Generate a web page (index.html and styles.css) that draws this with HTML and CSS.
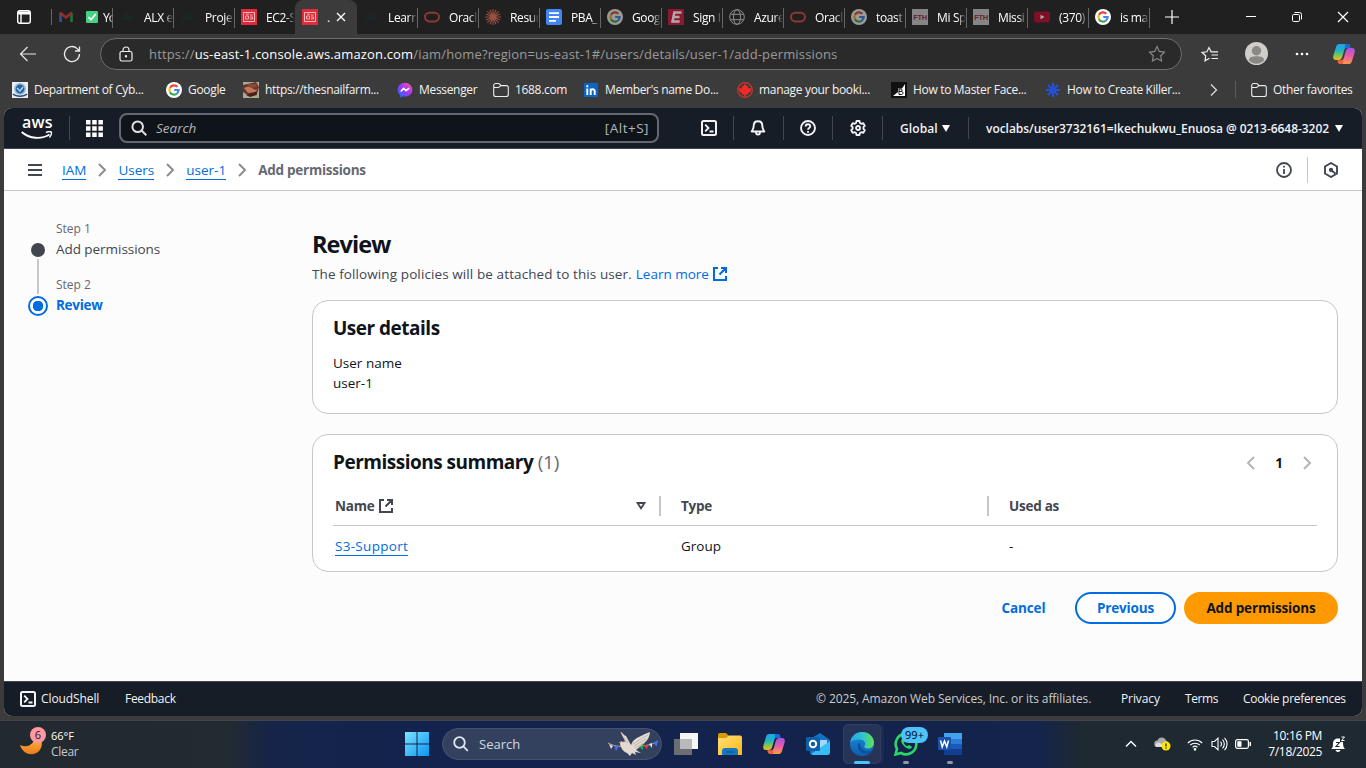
FILE: index.html
```html
<!DOCTYPE html>
<html lang="en">
<head>
<meta charset="utf-8">
<title>Add permissions | IAM | Global</title>
<link rel="stylesheet" href="styles.css">
</head>
<body>
<svg class="defs" width="0" height="0">
  <defs>
    <linearGradient id="cpA" x1="0" y1="0" x2="0" y2="1"><stop offset="0" stop-color="#1fa0e8"/><stop offset=".45" stop-color="#22b8c0"/><stop offset=".75" stop-color="#8fc83e"/><stop offset="1" stop-color="#f4b223"/></linearGradient>
    <linearGradient id="cpB" x1="0" y1="0" x2="0" y2="1"><stop offset="0" stop-color="#a552e8"/><stop offset=".5" stop-color="#e85aa8"/><stop offset="1" stop-color="#ff9a4a"/></linearGradient>
    <linearGradient id="edA" x1="0" y1="0" x2="1" y2="0"><stop offset="0" stop-color="#2aa5e0"/><stop offset=".5" stop-color="#2cc3d0"/><stop offset="1" stop-color="#62e04c"/></linearGradient>
    <linearGradient id="edB" x1="0" y1="0" x2="0" y2="1"><stop offset="0" stop-color="#1b8fd8"/><stop offset="1" stop-color="#0c5db0"/></linearGradient>
    <linearGradient id="win" x1="0" y1="0" x2="1" y2="1"><stop offset="0" stop-color="#7be3ff"/><stop offset="1" stop-color="#0a94f0"/></linearGradient>
    <linearGradient id="moon" x1="0" y1="0" x2="0" y2="1"><stop offset="0" stop-color="#ffc14d"/><stop offset="1" stop-color="#ee7a16"/></linearGradient>
    <linearGradient id="fold" x1="0" y1="0" x2="1" y2="1"><stop offset="0" stop-color="#ffe07a"/><stop offset="1" stop-color="#fcb813"/></linearGradient>
    <linearGradient id="msg" x1="0" y1="1" x2="1" y2="0"><stop offset="0" stop-color="#0a7cff"/><stop offset=".5" stop-color="#a033ff"/><stop offset="1" stop-color="#ff5c87"/></linearGradient>
    <symbol id="google" viewBox="0 0 16 16"><circle cx="8" cy="8" r="8" fill="#fff"/><g fill="none" stroke-width="2.2"><path d="M11.3 4.7A4.6 4.6 0 0 0 4 5.800" stroke="#ea4335"/><path d="M4 5.800a4.600 4.600 0 0 0 0 4.400" stroke="#fbbc05"/><path d="M4 10.200a4.600 4.600 0 0 0 7 1.300" stroke="#34a853"/><path d="M11 11.500A4.600 4.600 0 0 0 12.600 8H8.200" stroke="#4285f4"/></g></symbol>
    <symbol id="badge" viewBox="0 0 16 16"><path fill="#dd2c3a" d="M0 0h16v16H0z"/><g fill="none" stroke="#ffb9bd"><path d="M2.500 3.500h11v9h-11z"/><path d="M4.500 7h3v3h-3zM9 6h2.500M9 8h2.500v2H9M5 5.200h3" stroke-width=".9"/></g></symbol>
    <symbol id="oracle" viewBox="0 0 16 16"><rect x="1" y="3.800" width="14" height="8.600" rx="4.300" fill="none" stroke="#8b3a30" stroke-width="2"/></symbol>
    <symbol id="fth" viewBox="0 0 16 16"><path fill="#868686" d="M0 0h16v16H0z"/><text x="8" y="10.800" text-anchor="middle" font-size="7.500" font-weight="700" font-family="Liberation Sans,sans-serif" fill="#682330">FTH</text></symbol>
    <symbol id="alx" viewBox="0 0 16 16"><text x="8" y="11" text-anchor="middle" font-size="9" font-weight="700" font-family="Liberation Sans,sans-serif" fill="#182b2b">alx</text></symbol>
    <symbol id="folder" viewBox="0 0 16 16"><path d="M.7 12.500v-9a2 2 0 0 1 2-2h2.700c.5 0 1 .2 1.300.6L8 3.600h5.300a2 2 0 0 1 2 2v6.900a2 2 0 0 1-2 2H2.700a2 2 0 0 1-2-2zM1 5.500h4.300c1.200 0 1.700-1.900 2.700-1.900" fill="none" stroke="#ececec" stroke-width="1.100"/></symbol>
    <symbol id="copilot" viewBox="0 0 24 24"><path fill="url(#cpA)" d="M7 2h8.500c2 0 2.500 1.500 3 3.500H15c-1.500 0-2.300 1-2.800 2.700L10 15.500C9.500 17 8.500 18 7 18H4C1.500 18 .7 16 1.400 13.500L4 5C4.600 3 5.500 2 7 2z"/><path fill="url(#cpB)" d="M17 22H8.500c-2 0-2.500-1.500-3-3.500H9c1.500 0 2.300-1 2.800-2.700L14 8.500C14.500 7 15.500 6 17 6h3c2.500 0 3.300 2 2.600 4.500L20 19c-.6 2-1.500 3-3 3z"/><path fill="#1869d8" d="M13 2h2.500c2 0 2.500 1.500 3 3.500H15c-1 0-1.700.5-2.200 1.300z"/><path fill="#f0603c" d="M11 22H8.500c-2 0-2.500-1.500-3-3.500H9c1 0 1.700-.5 2.200-1.300z"/></symbol>
    <symbol id="shell" viewBox="0 0 16 16"><rect x="1" y="1" width="14" height="14" rx="1.500" fill="none" stroke="currentColor" stroke-width="2"/><path d="M4.200 4.700 7.500 8l-3.300 3.300M8.500 11.500h4" fill="none" stroke="currentColor" stroke-width="1.800"/></symbol>
    <symbol id="chev" viewBox="0 0 16 16"><path d="m5 2 6 6-6 6" fill="none" stroke="currentColor" stroke-width="2"/></symbol>
    <symbol id="ext" viewBox="0 0 16 16"><path d="M6 2H2v12h12v-4M9 2h5v5M14 2 7.500 8.500" fill="none" stroke="currentColor" stroke-width="2"/></symbol>
  </defs>
</svg>

<div class="tabstrip">
  <div class="tabmenu"><svg width="16" height="16" viewBox="0 0 16 16" fill="none" stroke="#fff" stroke-width="1.400"><rect x="1.700" y="1.700" width="12.600" height="12.600" rx="2.200"/><path d="M2 4h12" stroke-width="3"/><path d="M5 4v10"/></svg></div>
  <div class="tab mail"><svg width="16" height="16" viewBox="0 0 16 16" fill="none" stroke-width="2.600"><path d="M2.500 13V4" stroke="#2c5794"/><path d="M13.500 13V4" stroke="#24733e"/><path d="m2 3.500 6 5 6-5" stroke="#982c27"/></svg><svg class="check" width="12" height="12" viewBox="0 0 12 12"><rect width="12" height="12" rx="1" fill="#45d083"/><path d="m2.500 6 2.500 2.700L9.700 3" fill="none" stroke="#fff" stroke-width="1.700"/></svg><span>Yo</span></div>
  <div class="tab"><svg><use href="#alx"/></svg><span>ALX e</span></div>
  <div class="tab"><svg><use href="#alx"/></svg><span>Proje</span></div>
  <div class="tab nosep"><svg><use href="#badge"/></svg><span>EC2-S</span></div>
  <div class="tab active"><svg><use href="#badge"/></svg><span>.</span><svg class="x" viewBox="0 0 16 16"><path d="m4 4 8 8M12 4l-8 8" stroke="#fff" stroke-width="1.300"/></svg></div>
  <div class="tab"><svg><use href="#alx"/></svg><span>Learn</span></div>
  <div class="tab"><svg><use href="#oracle"/></svg><span>Oracl</span></div>
  <div class="tab"><svg viewBox="0 0 16 16" stroke="#9a5040" stroke-width="1.100"><path d="M8 0v16M0 8h16M2.300 2.300l11.400 11.400M13.700 2.300 2.300 13.700M5 .8l6 14.400M11 .8 5 15.200M.8 5l14.400 6M.8 11l14.400-6"/></svg><span>Resur</span></div>
  <div class="tab"><svg viewBox="0 0 16 16"><rect width="16" height="16" rx="2" fill="#4285f4"/><path d="M3 4.200h10M3 8h10M3 11.800h7" stroke="#fff" stroke-width="1.800"/></svg><span>PBA_</span></div>
  <div class="tab dim"><svg><use href="#google"/></svg><span>Goog</span></div>
  <div class="tab"><svg viewBox="0 0 16 16"><path fill="#8c1832" d="M0 0h16v16H0z"/><path d="M13.500 3.500H6.300L4.500 12.500h7.200M5.500 8h6" fill="none" stroke="#b3a5a8" stroke-width="2.500"/></svg><span>Sign I</span></div>
  <div class="tab"><svg viewBox="0 0 16 16" fill="none" stroke="#8e8e8e"><circle cx="8" cy="8" r="7.300"/><ellipse cx="8" cy="8" rx="3.500" ry="7.300"/><path d="M1.500 5.300h13M1.500 10.700h13"/></svg><span>Azure</span></div>
  <div class="tab"><svg><use href="#oracle"/></svg><span>Oracl</span></div>
  <div class="tab dim"><svg><use href="#google"/></svg><span>toast</span></div>
  <div class="tab"><svg><use href="#fth"/></svg><span>Mi Sp</span></div>
  <div class="tab"><svg><use href="#fth"/></svg><span>Missi</span></div>
  <div class="tab"><svg viewBox="0 0 16 16"><rect y="2.500" width="16" height="11" rx="2.500" fill="#7d1026"/><path d="m6.500 5.700 4 2.300-4 2.300z" fill="#aaa"/></svg><span>(370)</span></div>
  <div class="tab"><svg><use href="#google"/></svg><span>is ma</span></div>
  <svg class="plus" width="14" height="14" viewBox="0 0 14 14"><path d="M7 0v14M0 7h14" stroke="#fff" stroke-width="1.200"/></svg>
  <div class="winctl">
    <svg width="12" height="12" viewBox="0 0 12 12"><path d="M1 5.500h10" stroke="#fff"/></svg>
    <svg width="12" height="12" viewBox="0 0 12 12" fill="none" stroke="#fff"><rect x="1.500" y="3.500" width="7" height="7" rx="1.200"/><path d="M3.500 1.500H8.500a2 2 0 0 1 2 2V8.500"/></svg>
    <svg width="12" height="12" viewBox="0 0 12 12"><path d="m1 1 10 10M11 1 1 11" stroke="#fff" stroke-width="1.200"/></svg>
  </div>
</div>

<div class="toolbar">
  <svg class="back" width="18" height="16" viewBox="0 0 18 16" fill="none" stroke="#e8e8e8" stroke-width="1.200"><path d="M17 8H1.500M8.500 1l-7 7 7 7"/></svg>
  <svg class="reload" width="18" height="18" viewBox="0 0 18 18" fill="none" stroke="#e8e8e8" stroke-width="1.300"><path d="M16.500 9a7.500 7.500 0 1 1-2.300-5.400L16.300 6M16.500 1.500V6H12"/></svg>
  <div class="address">
    <svg width="14" height="16" viewBox="0 0 14 16" fill="none" stroke="#f0f0f0" stroke-width="1.200"><rect x="1" y="5.500" width="12" height="9.500" rx="1.800"/><path d="M4 5.500V4a3 3 0 0 1 6 0v1.500"/><circle cx="7" cy="10.200" r=".6"/></svg>
    <div class="url">https://<b>us-east-1.console.aws.amazon.com</b>/iam/home?region=us-east-1#/users/details/user-1/add-permissions</div>
    <svg class="star" width="18" height="18" viewBox="0 0 18 18" fill="none" stroke="#8d8d8d" stroke-width="1.100"><path d="m9 1.500 2.300 4.900 5.200.7-3.800 3.700.9 5.300L9 13.600l-4.600 2.500.9-5.300L1.500 7.100l5.200-.7z"/></svg>
  </div>
  <svg class="favs" width="18" height="18" viewBox="0 0 18 18" fill="none" stroke="#f0f0f0" stroke-width="1.200"><path d="M8.500 13.200 4 15.800l.7-5L1.200 7.500l4.700-.7L8 2.500l2.100 4.300H17M10.500 10H17M10.500 13.500H17"/></svg>
  <svg class="avatar" width="23" height="23" viewBox="0 0 23 23"><circle cx="11.500" cy="11.500" r="11.500" fill="#d0cecb"/><circle cx="11.500" cy="8.800" r="4.700" fill="#8a8784"/><path d="M4 18.500c0-3.500 3.500-4.200 7.500-4.200s7.500.7 7.500 4.200a10.500 10.500 0 0 1-15 0z" fill="#8a8784"/></svg>
  <svg class="more" width="14" height="4" viewBox="0 0 14 4" fill="#fff"><circle cx="2" cy="2" r="1.300"/><circle cx="7" cy="2" r="1.300"/><circle cx="12" cy="2" r="1.300"/></svg>
  <svg class="cop" width="24" height="24"><use href="#copilot"/></svg>
</div>

<div class="favorites">
  <div class="fav f1"><svg viewBox="0 0 16 16"><path fill="#e9eef2" d="M0 0h16v16H0z"/><circle cx="8" cy="7" r="6" fill="#9bbbd0"/><circle cx="8" cy="7" r="4.400" fill="#2464a5"/><path d="m5 6 3 3 3-4" stroke="#b9ddf3" stroke-width="1.300" fill="none"/><path d="M1 12c3 3 11 3 14 0" stroke="#244a83" stroke-width="1.500" fill="none"/></svg>Department of Cyb...</div>
  <div class="fav f2"><svg><use href="#google"/></svg>Google</div>
  <div class="fav f3"><svg viewBox="0 0 16 16"><path fill="#a9aa98" d="M0 0h16v16H0z"/><path fill="#6e3226" d="M0 3 13 0l3 5-2 7-8 2-6-4z"/><path fill="#c17a5f" d="M1 6q5-3 8 0t6 1l-3 3-7 1z"/><path fill="#8a4a38" d="M4 2h9l1 3-6 1z"/><path fill="#4a2019" d="M3 13l10-3 1 3-7 2z"/></svg>https://thesnailfarm...</div>
  <div class="fav f4"><svg viewBox="0 0 16 16"><path fill="url(#msg)" d="M8 .8c4.100 0 7.300 3 7.300 6.900S12.100 14.600 8 14.600c-.8 0-1.500-.1-2.200-.3l-2.600 1.100V13A6.800 6.800 0 0 1 .7 7.700C.7 3.800 3.900.8 8 .8z"/><path d="m3.800 9.500 2.800-3L9 8.700l3.200-2.500" fill="none" stroke="#fff" stroke-width="1.600"/></svg>Messenger</div>
  <div class="fav f5"><svg><use href="#folder"/></svg>1688.com</div>
  <div class="fav f6"><svg viewBox="0 0 16 16"><path fill="#0a66c2" d="M1 1h14v14H1z"/><path d="M4.300 6.500V13M4.300 3.300v1.900M7.700 13V6.500M7.700 9c0-2.200 4-2.500 4 0v4" fill="none" stroke="#fff" stroke-width="1.900"/></svg>Member's name Do...</div>
  <div class="fav f7"><svg viewBox="0 0 16 16"><circle cx="8" cy="8" r="7.300" fill="none" stroke="#d8342c" stroke-width="1.200"/><path fill="#f52a28" d="m8 1.500 1.600 2.800 1.600-.8-.3 3 3.300-.8-.8 2.300 1.100.8-3.600 2.600.4 1.200-2.600-.2.100 2.100H7.200l.1-2.100-2.600.2.400-1.200-3.600-2.600 1.100-.8-.8-2.300 3.300.8-.3-3 1.600.8z"/></svg>manage your booki...</div>
  <div class="fav f8"><svg viewBox="0 0 16 16"><path fill="#111" d="M0 0h16v16H0z"/><path fill="#fff" d="M14 2v12H2l5-4V6.500h4z"/><path d="M8 7v5.500h2.500c2 0 2-3 0-3H8M8 7h2c1.500 0 1.500 2.500 0 2.500" fill="none" stroke="#111"/></svg>How to Master Face...</div>
  <div class="fav f9"><svg viewBox="0 0 16 16" stroke="#2450dc" stroke-width="2.200" fill="none"><path d="M8 .8V7M8 9v6.200M1 8h6M9 8h6M3 3l4 4M9 9l4 4M13 3 9 7M7 9l-4 4"/><circle cx="8" cy="8" r="1.500"/></svg>How to Create Killer...</div>
  <svg class="morefav" width="8" height="14" viewBox="0 0 8 14"><path d="m1 1.500 5.500 5.500L1 12.500" fill="none" stroke="#ddd" stroke-width="1.300"/></svg>
  <div class="fav other"><svg><use href="#folder"/></svg>Other favorites</div>
</div>

<div class="page">
  <header class="nav">
    <div class="logo"><span>aws</span><svg width="32" height="9" viewBox="0 0 32 9" fill="none" stroke="#fff" stroke-width="1.900"><path d="M.7 1C8.500 8 20.500 8.500 28.500 3.500" /><path d="M25 1.500c2-.9 4.500-1 5.300-.4.500 1.300-.3 3.600-1.800 5.400" stroke-width="1.400"/></svg></div>
    <div class="apps"><svg width="17" height="17" viewBox="0 0 17 17" fill="#fff"><path d="M0 0h4.500v4.500H0zM6.200 0h4.500v4.500H6.200zM12.400 0h4.500v4.500h-4.500zM0 6.200h4.500v4.500H0zM6.200 6.200h4.500v4.500H6.200zM12.400 6.200h4.500v4.500h-4.500zM0 12.400h4.500v4.500H0zM6.200 12.400h4.500v4.500H6.200zM12.400 12.400h4.500v4.500h-4.500z"/></svg></div>
    <div class="search"><svg width="16" height="16" viewBox="0 0 16 16" fill="none" stroke="#dedee3" stroke-width="2"><circle cx="6.700" cy="6.700" r="5.300"/><path d="m10.500 10.500 4.800 4.800"/></svg><i>Search</i><span>[Alt+S]</span></div>
    <div class="ico first"><svg width="16" height="16"><use href="#shell"/></svg></div>
    <div class="ico"><svg width="16" height="16" viewBox="0 0 16 16" fill="none" stroke="currentColor" stroke-width="1.900"><path d="M8 1.200c-2.700 0-4.300 2-4.300 4.500 0 3-1.200 4.300-2 5.800h12.600c-.8-1.500-2-2.800-2-5.800 0-2.500-1.600-4.500-4.300-4.500zM6 12c0 3.500 4 3.500 4 0" stroke-linejoin="round"/></svg></div>
    <div class="ico"><svg width="16" height="16" viewBox="0 0 16 16" fill="none" stroke="currentColor" stroke-width="1.900"><circle cx="8" cy="8" r="7"/><path d="M5.700 6.500C5.700 3.500 10.300 3.600 10.300 6.300 10.300 8 8 8 8 9.800M8 11v1.700"/></svg></div>
    <div class="ico"><svg width="16" height="16" viewBox="0 0 16 16" fill="none" stroke="currentColor" stroke-width="1.800" stroke-linejoin="round"><path d="M6.500 1h3l.5 2 1.300.8 2-.6 1.500 2.600L13.400 7.200v1.600l1.400 1.400-1.500 2.600-2-.6-1.300.8-.5 2h-3l-.5-2-1.300-.8-2 .6-1.500-2.600 1.400-1.400V7.200L1.200 5.800l1.500-2.600 2 .6L6 3z"/><circle cx="8" cy="8" r="2"/></svg></div>
    <div class="region">Global<svg class="tri" width="8" height="7" viewBox="0 0 8 7"><path d="M0 0h8L4 7z" fill="#fff"/></svg></div>
    <div class="account"><span>voclabs/user3732161=Ikechukwu_Enuosa @ 0213-6648-3202</span><svg class="tri" width="8" height="7" viewBox="0 0 8 7"><path d="M0 0h8L4 7z" fill="#fff"/></svg></div>
  </header>

  <div class="crumbs">
    <svg class="burger" width="14" height="12" viewBox="0 0 14 12"><path d="M0 1h14M0 6h14M0 11h14" stroke="#424650" stroke-width="2"/></svg>
    <a class="c1">IAM</a><svg class="sep"><use href="#chev"/></svg>
    <a class="c2">Users</a><svg class="sep"><use href="#chev"/></svg>
    <a class="c3">user-1</a><svg class="sep"><use href="#chev"/></svg>
    <b>Add permissions</b>
    <div class="info"><svg width="16" height="16" viewBox="0 0 16 16" fill="none" stroke="#424650" stroke-width="1.800"><circle cx="8" cy="8" r="7"/><path d="M8 3.800v1.800M8 7v5" /></svg></div>
    <div class="hex"><svg width="16" height="16" viewBox="0 0 16 16" fill="none" stroke="#424650" stroke-width="1.900"><path d="m8 1 6 3.500v7L8 15l-6-3.500v-7z"/><circle cx="8" cy="8" r="1.200" fill="#424650"/><path d="m8.500 8.500 4 3"/></svg></div>
  </div>

  <div class="body">
    <aside class="steps">
      <div class="step done"><div class="mark"><i class="dot"></i><i class="line"></i></div><div><small>Step 1</small><p>Add permissions</p></div></div>
      <div class="step current"><div class="mark"><i class="ring"></i></div><div><small>Step 2</small><p>Review</p></div></div>
    </aside>
    <main>
      <h1>Review</h1>
      <p class="desc"><span>The following policies will be attached to this user.</span> <a>Learn more</a> <svg width="16" height="16"><use href="#ext"/></svg></p>
      <section class="card details">
        <h2>User details</h2>
        <p>User name</p>
        <p>user-1</p>
      </section>
      <section class="card summary">
        <div class="cardhead"><h2>Permissions summary <em>(1)</em></h2>
          <div class="pager"><svg class="prev"><use href="#chev"/></svg><b>1</b><svg><use href="#chev"/></svg></div></div>
        <div class="row head">
          <div class="cell n">Name <svg width="16" height="16"><use href="#ext"/></svg><svg class="sort" width="10" height="8" viewBox="0 0 10 8"><path d="M1.500 1h7L5 6.300z" fill="none" stroke="#424650" stroke-width="1.800"/></svg></div>
          <div class="cell t">Type</div>
          <div class="cell u">Used as</div>
        </div>
        <div class="row">
          <div class="cell n"><a>S3-Support</a></div>
          <div class="cell t">Group</div>
          <div class="cell u">-</div>
        </div>
      </section>
      <div class="actions"><span class="btn link">Cancel</span><span class="btn outline">Previous</span><span class="btn primary">Add permissions</span></div>
    </main>
  </div>

  <footer>
    <svg width="16" height="16"><use href="#shell"/></svg>
    <span class="cs">CloudShell</span><span class="fb">Feedback</span>
    <span class="copy">© 2025, Amazon Web Services, Inc. or its affiliates.</span>
    <span class="pv">Privacy</span><span class="tm">Terms</span><span class="ck">Cookie preferences</span>
  </footer>
</div>

<div class="taskbar">
  <div class="weather">
    <svg width="26" height="30" viewBox="0 0 26 30"><path d="M0 18c8 4 16-2 14.500-10C22 9 24 18 19.500 23.500 14 30 3 28 0 18z" fill="url(#moon)"/><circle cx="18" cy="8" r="8" fill="#ff98a0"/><text x="18" y="12" text-anchor="middle" font-size="11" font-family="Open Sans,sans-serif" fill="#222">6</text></svg>
    <div>66°F<span>Clear</span></div>
  </div>
  <svg class="start" width="24" height="24" viewBox="0 0 24 24"><path fill="url(#win)" d="M0 0h11.500v11.500H0zM12.500 0H24v11.500H12.500zM0 12.500h11.500V24H0zM12.500 12.500H24V24H12.500z"/></svg>
  <div class="tsearch">
    <svg width="16" height="16" viewBox="0 0 16 16" fill="none" stroke="#dfe5ee" stroke-width="1.800"><circle cx="6.500" cy="6.500" r="5.300"/><path d="m10.300 10.300 4.500 4.500"/></svg>Search
    <svg class="dove" width="52" height="28" viewBox="0 0 52 28"><path d="M1 13c8 4 14 4 20 2M31 16c8 0 14-1 20-5" stroke="#d8bfae" fill="none" stroke-width=".8"/><path fill="#f2d6d0" d="m2 14 4 2-2 3z"/><path fill="#4a6cf0" d="m7 15.500 5 1-3 4.500z"/><path fill="#f6be25" d="m15 16.500 5-.5-1.500 5z"/><path fill="#e2dad0" d="M13.500 2c1 0 2.500 1.500 3.500 3l2 1 5 9 2-4c4-4 10-6 17-9-.5 7-5 11-9 14l-5 4 5 3-6-1 1 3-4-2-2 3-3-3c-5-2-6-6-7-9-.5-3 4-4.500 6-1z"/><path d="m26 14 15-9M27 16l12-7M28 18l9-5" stroke="#b5a79c" stroke-width=".7"/><path d="M15 5l6 8" stroke="#b5a79c" stroke-width=".7"/><circle cx="16" cy="11.500" r=".7" fill="#2b2b2b"/><path d="m13.500 11.500-2 1 2 1z" fill="#db8b65"/><path fill="#28a35c" d="m32 17 4-2 0 5z"/><path fill="#e84338" d="m37 15 4-.5-1 5z"/><path fill="#e9e4d9" d="m42 14 3-1 0 5z"/><path fill="#4a6cf0" d="m46 12.500 5-2-1.500 6z"/></svg>
  </div>
  <div class="apps2">
    <div class="app"><svg viewBox="0 0 24 24"><path fill="#f5f5f5" d="M6 1h18v16H6z"/><path fill="#777" opacity=".9" d="M0 7h18v16H0z"/><path fill="#b9b9b9" d="M6 7h12v10H6z"/></svg></div>
    <div class="app"><svg viewBox="0 0 24 24"><path fill="#d99a00" d="M0 3a2 2 0 0 1 2-2h6l3 3v4H0z"/><path fill="url(#fold)" d="M0 6h8l3-2.500h11a2 2 0 0 1 2 2V23H0z"/><path fill="#1576c2" d="M4 23v-4a3 3 0 0 1 3-3h10a3 3 0 0 1 3 3v4z"/><path d="M8 20h8" stroke="#0c5596" stroke-width="1.200"/></svg></div>
    <div class="app"><svg><use href="#copilot"/></svg></div>
    <div class="app"><svg viewBox="0 0 24 24"><path fill="#1473c8" d="M4 7 14 1l10 7v12a3 3 0 0 1-3 3H7a3 3 0 0 1-3-3z"/><path fill="#a3d7f7" d="M12 8h9v5l-6 4-6-4z"/><path fill="#36bdf5" d="M24 9v11a3 3 0 0 1-3 3H7l-2-1z"/><rect y="5" width="14" height="14" rx="1.500" fill="#0f5ea8"/><circle cx="7" cy="12" r="3.200" fill="none" stroke="#fff" stroke-width="2"/></svg></div>
    <div class="app on"><svg viewBox="0 0 24 24"><circle cx="12" cy="12" r="12" fill="url(#edB)"/><path fill="url(#edA)" d="M.3 10C1.500 4 6 0 12 0c7 0 12 5 12 10.500 0 4-3 6-6.200 6-3 0-4.300-1.300-3.300-2.500 2.200-3-.5-6.500-5-6.500-4 0-7 1-9.200 2.500z"/><path fill="#0d4f9c" d="M9.500 10C6 14 8.500 20.500 15 21.500c3 .3 5.500-1 7.200-3-5 2.500-11.500 1-12.700-8.500z"/></svg><u></u></div>
    <div class="app"><svg viewBox="0 0 24 24" fill="none"><path d="M1.500 22.500 3 17A10.300 10.300 0 1 1 7 21z" stroke="#2bd566" stroke-width="2.600"/><path d="M8 7c-2 2 0 5 2.500 7.500 2.500 2 5.500 3.300 7 1.500l.3-1.600-3-1.400-1.500 1.300c-1.600-.6-2.800-1.800-3.500-3.300L11 9.500 9.800 6.700z" fill="#2bd566"/></svg><span class="count">99+</span><u></u></div>
    <div class="app"><svg viewBox="0 0 24 24"><path fill="#41a5ee" d="M6 1h18v6H6z"/><path fill="#2b7cd3" d="M6 7h18v5H6z"/><path fill="#185abd" d="M6 12h18v5.500H6z"/><path fill="#103f91" d="M6 17.500h18V23H6z"/><rect y="5" width="13" height="13" rx="1" fill="#1852ad"/><path d="m2.500 8.500 1.700 6.300L6.500 9l2.300 5.800 1.700-6.300" fill="none" stroke="#fff" stroke-width="1.500"/></svg><u></u></div>
  </div>
  <div class="tray">
    <svg class="t1" width="12" height="8" viewBox="0 0 12 8"><path d="m1 6.500 5-5 5 5" fill="none" stroke="#fff" stroke-width="1.400"/></svg>
    <svg class="t2" width="17" height="14" viewBox="0 0 17 14"><path d="M3.500 10a3.200 3.200 0 0 1 0-6.400A4.500 4.500 0 0 1 12 3.500C14 4 14.500 6 14 10z" fill="#aaa"/><path d="M1 9c2-6 7-3 8 1H3z" fill="#ddd"/><circle cx="12" cy="9" r="4.500" fill="#ffe600"/><path d="M12 6.500v3M12 10.500v1.200" stroke="#222" stroke-width="1.200"/></svg>
    <svg class="t3" width="16" height="13" viewBox="0 0 16 13" fill="none" stroke="#fff" stroke-width="1.100"><path d="M.8 5a10 10 0 0 1 14.400 0M3.200 7.200a6.800 6.800 0 0 1 9.600 0M5.600 9.400a3.400 3.400 0 0 1 4.800 0"/><circle cx="8" cy="11.300" r=".8" fill="#fff"/></svg>
    <svg class="t4" width="17" height="14" viewBox="0 0 17 14" fill="none" stroke="#fff" stroke-width="1.100"><path d="M1 4.500h2.500L7 1.200v11.600L3.500 9.500H1zM9.500 4.700c1.300 1.300 1.300 3.300 0 4.600M11.500 2.700a6 6 0 0 1 0 8.600M13.500.8a8.800 8.800 0 0 1 0 12.400"/></svg>
    <svg class="t5" width="16" height="10" viewBox="0 0 16 10"><rect x=".6" y=".6" width="12.800" height="8.800" rx="1.800" fill="none" stroke="#fff" stroke-width="1.200"/><path d="M2.300 2.300h4.200v5.400H2.300zM14.500 3H16v4h-1.500z" fill="#fff"/></svg>
    <div class="clock">10:16 PM<br>7/18/2025</div>
    <svg class="bell" width="15" height="16" viewBox="0 0 15 16"><path d="M0 13c1.500-1 2-2 2-5.500C2 4.500 4 2.500 7 2.500h2V6h3c0 3.500.5 6 2 7zM4.500 14c.5 2.500 4.500 2.500 5 0z" fill="#fff"/><path d="M5 6.500h3.500L5 10.500h3.500" stroke="#1d2a36" fill="none" stroke-width="1.100"/><path d="M10.500 1h3l-3 3.500h3" stroke="#fff" fill="none"/></svg>
  </div>
</div>
</body>
</html>
```
FILE: styles.css
```css
* { box-sizing: border-box; }
body { margin: 0; width: 1366px; height: 768px; overflow: hidden; background: #3b3b3b; font-family: "Open Sans", "Noto Sans", sans-serif; font-size: 12px; display: flex; flex-direction: column; }
svg { flex: none; display: block; }
p, h1, h2 { margin: 0; }
.defs { position: absolute; }

/* Browser tabs */
.tabstrip { height: 34px; background: #202020; display: flex; align-items: center; color: #fff; flex: none; }
.tabmenu { width: 52px; height: 16px; padding-left: 16px; border-right: 1px solid #666; }
.tab { width: 61px; height: 34px; padding-left: 6px; display: flex; align-items: center; flex: none; overflow: hidden; letter-spacing: -0.35px; background: linear-gradient(#666, #666) right 60% / 1px 20px no-repeat; }
.tab svg { width: 16px; height: 16px; }
.tab span { margin-left: 9px; white-space: nowrap; width: 29px; overflow: hidden; -webkit-mask-image: linear-gradient(90deg, #000 70%, transparent); mask-image: linear-gradient(90deg, #000 70%, transparent); }
.tab.nosep { background: none; }
.tab.mail .check { width: 12px; height: 12px; margin-left: 12px; }
.tab.mail span { margin-left: 5px; width: 10px; letter-spacing: -1px; }
.tab.dim svg { opacity: .55; }
.tab.active { background: #3b3b3b; border-radius: 8px 8px 0 0; width: 62px; margin: 0 0 0 -1px; padding-left: 7px; }
.tab.active span { width: 5px; mask-image: none; -webkit-mask-image: none; }
.tab.active .x { margin-left: 1px; }
.plus { margin-left: 15px; }
.winctl { margin-left: auto; display: flex; gap: 34px; padding-right: 17px; }

/* Browser toolbar */
.toolbar { height: 39px; flex: none; display: flex; align-items: center; }
.back { margin-left: 19px; }
.reload { margin-left: 26px; }
.address { margin-left: 19px; width: 1082px; height: 32px; border: 1px solid #6e6e6e; border-radius: 16px; background: #2a2a2a; display: flex; align-items: center; padding: 0 15px 0 18px; }
.url { margin-left: 16px; font-size: 13px; color: #9a9a9a; white-space: nowrap; flex: 1; letter-spacing: 0.16px; }
.url b { color: #fff; font-weight: 400; }
.favs { margin-left: 19px; }
.avatar { margin-left: 26px; }
.more { margin-left: 27px; }
.cop { margin-left: 23px; }

/* Favorites bar */
.favorites { height: 35px; flex: none; display: flex; align-items: center; color: #f2f2f2; padding: 0 0 2px 12px; }
.fav { display: flex; align-items: center; gap: 6px; white-space: nowrap; flex: none; letter-spacing: -0.32px; }
.fav svg { width: 16px; height: 16px; margin-top: 1px; }
.f1 { width: 154px; } .f2 { width: 77px; } .f3 { width: 154px; } .f4 { width: 96px; }
.f5 { width: 90px; } .f6 { width: 154px; } .f7 { width: 154px; } .f8 { width: 154px; } .f9 { width: 165px; }
.morefav { margin-right: 17px; }
.other { border-left: 1px solid #5c5c5c; padding-left: 15px; }

/* Console window */
.page { margin: 0 4px; height: 608px; flex: none; border-radius: 8px; overflow: hidden; background: #fcfcfd; display: flex; flex-direction: column; color: #0f141a; font-size: 13.5px; }
.nav { height: 41px; flex: none; background: #161d26; border-bottom: 1px solid #424650; display: flex; align-items: center; color: #f3f3f7; font-size: 12px; }
.logo { width: 66px; height: 24px; padding-left: 17px; border-right: 1px solid #424650; }
.logo span { display: block; font: 600 16px/13px "Open Sans", sans-serif; height: 15px; padding-left: 1px; letter-spacing: .2px; color: #fff; }
.apps { width: 49px; padding-left: 16px; }
.search { width: 540px; height: 30px; border: 2px solid #656871; border-radius: 8px; background: #0f141a; display: flex; align-items: center; padding: 0 8px 0 10px; color: #b4b4bb; font-size: 13.5px; }
.search i { margin-left: 9px; flex: 1; }
.search span { letter-spacing: 0.5px; }
.ico { width: 49.700px; height: 24px; display: flex; align-items: center; justify-content: center; border-right: 1px solid #424650; }
.ico.first { width: 75px; padding-left: 26px; }
.region { width: 86px; height: 22px; padding-left: 17px; border-right: 1px solid #424650; display: flex; align-items: center; font-weight: 600; letter-spacing: 0.1px; }
.region .tri { margin-left: 4px; }
.account { padding-left: 17px; display: flex; align-items: center; white-space: nowrap; font-weight: 600; letter-spacing: -0.05px; }
.account span { width: 349px; }

.crumbs { height: 42px; flex: none; background: #fff; border-bottom: 1px solid #c6c6cd; display: flex; align-items: center; padding-left: 24px; color: #656871; }
.crumbs .c1 { margin-left: 20px; }
.crumbs a { color: #006ce0; border-bottom: 1px solid #006ce0; line-height: 18px; padding-top: 1px; }
.crumbs .sep { width: 16px; height: 16px; margin: 0 8px; color: #8c8c94; }
.crumbs b { font-weight: 700; letter-spacing: -0.25px; }
.info { margin-left: auto; width: 32px; height: 26px; border-right: 1px solid #c6c6cd; display: flex; align-items: center; }
.hex { width: 54px; padding-left: 15px; }

.body { flex: 1; display: flex; }
.steps { width: 308px; padding: 30px 0 0 24px; }
.step { display: flex; height: 56px; gap: 8px; }
.step small { display: block; font-size: 12px; line-height: 16px; color: #656871; letter-spacing: 0; }
.step p { line-height: 20px; margin-top: 2px; color: #424650; letter-spacing: -0.05px; }
.step.current p { color: #006ce0; font-weight: 700; letter-spacing: -0.3px; }
.mark { width: 20px; display: flex; flex-direction: column; align-items: center; }
.dot { width: 14px; height: 14px; border-radius: 50%; background: #424650; margin-top: 22px; flex: none; }
.line { width: 2px; height: 35px; margin-top: 2px; background: #c6c6cd; flex: none; }
.ring { width: 20px; height: 20px; border: 2px solid #006ce0; border-radius: 50%; margin-top: 19px; background: radial-gradient(circle, #006ce0 5px, transparent 5.500px); }
main { width: 1026px; padding-top: 37px; }
h1 { font-size: 23.5px; line-height: 32px; font-weight: 700; letter-spacing: -0.9px; }
.desc { display: flex; align-items: center; height: 20px; margin-top: 4px; color: #424650; letter-spacing: 0.1px; }
.desc a, .desc svg { color: #006ce0; }
.desc a { margin: 0 3px 0 4px; letter-spacing: 0; }
.card { border: 1px solid #c6c6cd; border-radius: 16px; background: #fff; padding: 15px 20px 0; }
h2 { font-size: 19px; line-height: 24px; font-weight: 700; letter-spacing: -0.5px; }
h2 em { font-style: normal; font-weight: 400; color: #656871; letter-spacing: -0.2px; }
.details { height: 114px; margin-top: 16px; }
.details h2 { margin-bottom: 13px; }
.details p { line-height: 20px; }
.summary { height: 138px; margin-top: 20px; }
.cardhead { display: flex; justify-content: space-between; align-items: center; height: 24px; }
.pager { display: flex; align-items: center; color: #b4b4bb; padding: 2px 2px 0 0; }
.pager svg { width: 16px; height: 16px; }
.pager .prev { transform: scaleX(-1); }
.pager b { width: 40px; text-align: center; color: #0f141a; }
.row { display: flex; height: 40px; align-items: center; }
.row.head { margin-top: 12px; border-bottom: 1px solid #c6c6cd; font-weight: 700; letter-spacing: -0.25px; color: #424650; }
.cell { display: flex; align-items: center; height: 20px; }
.cell.n { width: 328px; padding-left: 2px; }
.cell.n svg { margin-left: 4px; }
.cell.n .sort { margin-left: auto; margin-right: 13px; }
.cell.t { width: 328px; padding-left: 20px; }
.cell.u { padding-left: 20px; }
.head .n, .head .t { border-right: 2px solid #c6c6cd; }
.cell a { color: #006ce0; border-bottom: 1px solid #006ce0; line-height: 18px; letter-spacing: 0.3px; padding-top: 1px; }
.actions { display: flex; justify-content: flex-end; margin-top: 20px; }
.btn { height: 32px; border-radius: 16px; font-weight: 700; letter-spacing: -0.15px; display: flex; align-items: center; justify-content: center; color: #006ce0; }
.link { width: 87px; margin-right: 8px; }
.outline { width: 101px; border: 2px solid #006ce0; background: #fff; }
.primary { width: 154px; background: #ff9900; color: #0f141a; margin-left: 8px; }

footer { height: 35px; flex: none; background: #161d26; border-top: 1px solid #424650; display: flex; align-items: center; color: #f3f3f7; font-size: 12px; padding: 0 0 1px 16px; white-space: nowrap; font-weight: 500; letter-spacing: -0.3px; }
.cs { margin-left: 5px; width: 84px; letter-spacing: -0.1px; }
.copy { margin-left: auto; width: 305px; color: #ccccd1; letter-spacing: -0.09px; }
.pv { width: 64px; letter-spacing: -0.1px; } .tm { width: 58px; letter-spacing: -0.4px; } .ck { width: 119px; }

/* Taskbar */
.taskbar { margin-top: 4px; height: 48px; flex: none; border-top: 1px solid #40454d; display: flex; align-items: center; color: #fff; background: linear-gradient(90deg, #22292f 0, #222a32 230px, #152448 270px, #14234d 400px, #14234c 960px, #15244a 1040px, #1e2932 1080px, #1f2931 100%); }
.weather { width: 405px; padding-left: 20px; display: flex; font-size: 11px; line-height: 16px; gap: 5px; padding-bottom: 1px; }
.weather svg { margin-top: -1px; }
.weather span { display: block; color: #c6cbd0; font-size: 12px; letter-spacing: -0.3px; }
.start { margin-bottom: 1px; }
.tsearch { margin: 0 0 1px 13px; width: 220px; height: 32px; border-radius: 16px; background: #33415f; border: 1px solid #46536f; display: flex; align-items: center; padding-left: 10px; gap: 10px; font-size: 13px; color: #d3d9e2; letter-spacing: 0; }
.dove { margin-left: auto; margin-right: 2px; }
.apps2 { display: flex; margin: 0 0 1px 2px; }
.app { width: 44px; height: 40px; display: flex; align-items: center; justify-content: center; position: relative; }
.app svg { width: 24px; height: 24px; }
.app.on { width: 38px; margin-right: 3px; margin-left: 3px; background: #263458; border-radius: 5px; box-shadow: inset 0 0 0 1px #303d60, 4px 0 0 -1px #1d2b50; }
.app u { position: absolute; bottom: 0; left: 50%; width: 6px; height: 3px; margin-left: -3px; border-radius: 2px; background: #9298a5; }
.app.on u { width: 16px; margin-left: -8px; background: #4cc2ff; }
.count { position: absolute; left: 17px; top: 3px; width: 27px; height: 16px; border-radius: 8px; background: #4cc2ff; color: #000; font-size: 11px; line-height: 16px; text-align: center; }
.tray { margin-left: auto; margin-bottom: 1px; display: flex; align-items: center; }
.t2 { margin-left: 17px; } .t3 { margin-left: 16px; } .t4 { margin-left: 8px; } .t5 { margin-left: 7px; }
.clock { width: 71px; text-align: right; font-size: 12px; line-height: 16px; letter-spacing: -0.35px; }
.bell { margin: 0 20px 0 9px; }
```
